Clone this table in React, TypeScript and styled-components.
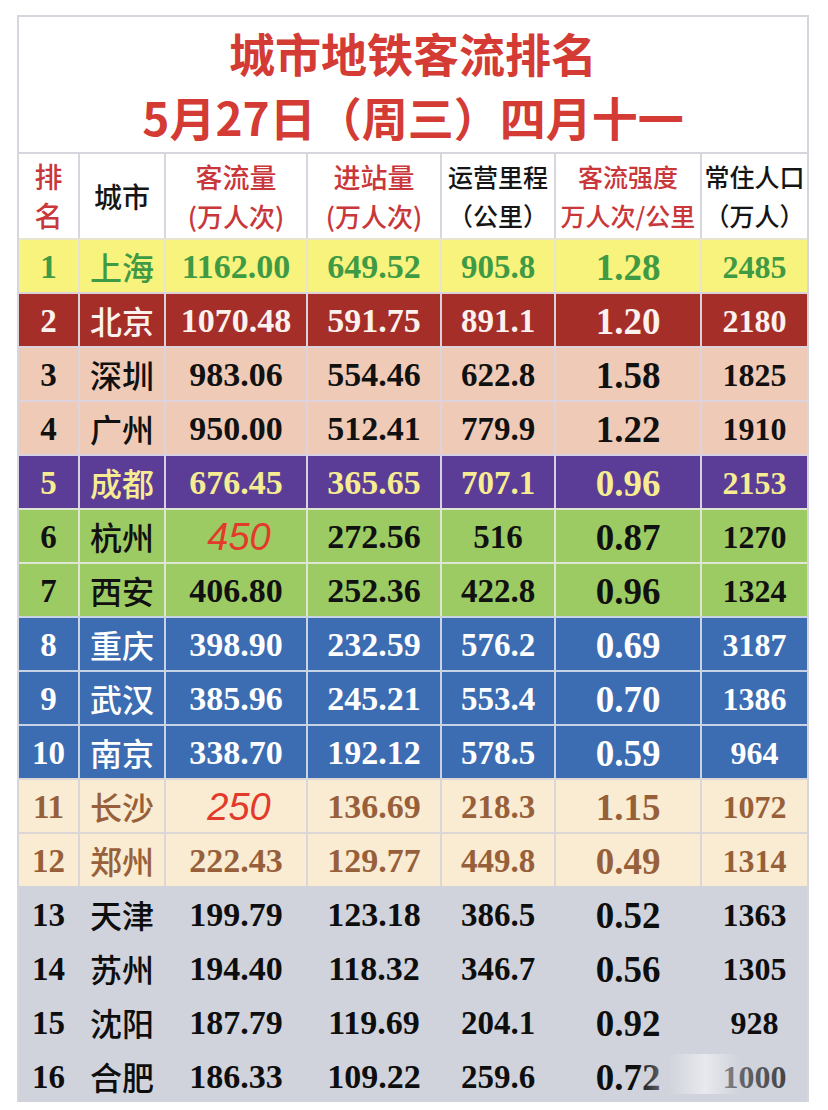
import React from "react";
import styled, { createGlobalStyle } from "styled-components";

const Global = createGlobalStyle`
  html, body { margin: 0; padding: 0; background: #ffffff; }
  body { width: 828px; height: 1110px; overflow: hidden; }
`;

const Page = styled.div`
  width: 828px;
  height: 1110px;
  padding: 15px 0 0 17px;
  box-sizing: border-box;
  background: #ffffff;
`;

const Board = styled.div`
  position: relative;
  width: 792px;
  border: 2px solid #d6d6de;
  border-bottom: none;
  box-sizing: border-box;
  background: #ffffff;
`;

const TitleBlock = styled.div`
  height: 135px;
  display: flex;
  flex-direction: column;
  align-items: center;
  justify-content: center;
  padding-bottom: 2px;
  box-sizing: border-box;
`;

const TitleLine = styled.div`
  font-family: "Noto Sans CJK SC", "Noto Sans", sans-serif;
  font-weight: 700;
  font-size: 46px;
  line-height: 64px;
  color: #d33b34;
  white-space: nowrap;
`;

const COLS = "59px 86px 142px 134px 114px 146px 107px";

type Tone = {
  bg: string;
  fg: string;
  line: string;
};

const Row = styled.div<{ $bg: string; $line: string; $h: number }>`
  display: grid;
  grid-template-columns: ${COLS};
  height: ${(p) => p.$h}px;
  background: ${(p) => p.$bg};
  border-top: 2px solid ${(p) => p.$line};
  box-sizing: border-box;
`;

const Cell = styled.div<{ $line: string; $first?: boolean }>`
  display: flex;
  flex-direction: column;
  align-items: center;
  justify-content: center;
  border-left: ${(p) => (p.$first ? "none" : `2px solid ${p.$line}`)};
  min-width: 0;
  white-space: nowrap;
`;

const HeadText = styled.div<{ $red?: boolean; $size: number }>`
  font-family: "Noto Sans CJK SC", "Noto Sans", sans-serif;
  font-weight: 500;
  font-size: ${(p) => p.$size}px;
  line-height: 39px;
  color: ${(p) => (p.$red ? "#c9373b" : "#151515")};
  white-space: nowrap;
`;

const Num = styled.div<{ $fg: string; $size: number }>`
  font-family: "Liberation Serif", "Times New Roman", serif;
  font-weight: 700;
  font-size: ${(p) => p.$size}px;
  line-height: 1;
  color: ${(p) => p.$fg};
  padding-top: 2px;
`;

const City = styled.div<{ $fg: string }>`
  font-family: "Noto Sans CJK SC", "Noto Sans", sans-serif;
  font-weight: 500;
  font-size: 32px;
  line-height: 1;
  color: ${(p) => p.$fg};
`;

const Highlight = styled.div`
  font-family: "Liberation Sans", Arial, sans-serif;
  font-style: italic;
  font-weight: 400;
  font-size: 38px;
  line-height: 1;
  color: #e23a2b;
  padding-left: 6px;
  padding-top: 2px;
`;

const Watermark = styled.div`
  position: absolute;
  right: 0;
  bottom: 8px;
  width: 170px;
  height: 40px;
  background: linear-gradient(
    90deg,
    rgba(208, 211, 220, 0) 0%,
    rgba(208, 211, 220, 0.55) 18%,
    rgba(240, 240, 244, 0.75) 40%,
    rgba(208, 211, 220, 0.45) 60%,
    rgba(208, 211, 220, 0.2) 100%
  );
  pointer-events: none;
`;

const tones: Record<string, Tone> = {
  yellow: { bg: "#f7f37c", fg: "#3f9a45", line: "#e7e4cf" },
  red: { bg: "#a52e29", fg: "#fbf1ee", line: "#dcd3da" },
  peach: { bg: "#efcbb7", fg: "#111111", line: "#ddd3dc" },
  purple: { bg: "#5b3d97", fg: "#f7ec92", line: "#d6d1e3" },
  green: { bg: "#9dcb63", fg: "#111111", line: "#dfe6d6" },
  blue: { bg: "#3c6db3", fg: "#ffffff", line: "#c9d3e6" },
  cream: { bg: "#f9ecd3", fg: "#97603a", line: "#dcd6d6" },
  gray: { bg: "#d0d3dc", fg: "#0e0e0e", line: "#d0d3dc" },
};

type Item = {
  rank: number;
  city: string;
  flow: string;
  entry: string;
  km: string;
  intensity: string;
  pop: string;
  tone: string;
  flowHighlight?: boolean;
};

const data: Item[] = [
  { rank: 1, city: "上海", flow: "1162.00", entry: "649.52", km: "905.8", intensity: "1.28", pop: "2485", tone: "yellow" },
  { rank: 2, city: "北京", flow: "1070.48", entry: "591.75", km: "891.1", intensity: "1.20", pop: "2180", tone: "red" },
  { rank: 3, city: "深圳", flow: "983.06", entry: "554.46", km: "622.8", intensity: "1.58", pop: "1825", tone: "peach" },
  { rank: 4, city: "广州", flow: "950.00", entry: "512.41", km: "779.9", intensity: "1.22", pop: "1910", tone: "peach" },
  { rank: 5, city: "成都", flow: "676.45", entry: "365.65", km: "707.1", intensity: "0.96", pop: "2153", tone: "purple" },
  { rank: 6, city: "杭州", flow: "450", entry: "272.56", km: "516", intensity: "0.87", pop: "1270", tone: "green", flowHighlight: true },
  { rank: 7, city: "西安", flow: "406.80", entry: "252.36", km: "422.8", intensity: "0.96", pop: "1324", tone: "green" },
  { rank: 8, city: "重庆", flow: "398.90", entry: "232.59", km: "576.2", intensity: "0.69", pop: "3187", tone: "blue" },
  { rank: 9, city: "武汉", flow: "385.96", entry: "245.21", km: "553.4", intensity: "0.70", pop: "1386", tone: "blue" },
  { rank: 10, city: "南京", flow: "338.70", entry: "192.12", km: "578.5", intensity: "0.59", pop: "964", tone: "blue" },
  { rank: 11, city: "长沙", flow: "250", entry: "136.69", km: "218.3", intensity: "1.15", pop: "1072", tone: "cream", flowHighlight: true },
  { rank: 12, city: "郑州", flow: "222.43", entry: "129.77", km: "449.8", intensity: "0.49", pop: "1314", tone: "cream" },
  { rank: 13, city: "天津", flow: "199.79", entry: "123.18", km: "386.5", intensity: "0.52", pop: "1363", tone: "gray" },
  { rank: 14, city: "苏州", flow: "194.40", entry: "118.32", km: "346.7", intensity: "0.56", pop: "1305", tone: "gray" },
  { rank: 15, city: "沈阳", flow: "187.79", entry: "119.69", km: "204.1", intensity: "0.92", pop: "928", tone: "gray" },
  { rank: 16, city: "合肥", flow: "186.33", entry: "109.22", km: "259.6", intensity: "0.72", pop: "1000", tone: "gray" },
];

const HEAD_LINE = "#d6d6de";

export default function App() {
  return (
    <>
      <Global />
      <Page>
        <Board>
          <TitleBlock>
            <TitleLine>城市地铁客流排名</TitleLine>
            <TitleLine>5月27日（周三）四月十一</TitleLine>
          </TitleBlock>

          <Row $bg="#ffffff" $line={HEAD_LINE} $h={86}>
            <Cell $line={HEAD_LINE} $first>
              <HeadText $red $size={28}>排</HeadText>
              <HeadText $red $size={28}>名</HeadText>
            </Cell>
            <Cell $line={HEAD_LINE}>
              <HeadText $size={28}>城市</HeadText>
            </Cell>
            <Cell $line={HEAD_LINE}>
              <HeadText $red $size={27}>客流量</HeadText>
              <HeadText $red $size={26}>(万人次)</HeadText>
            </Cell>
            <Cell $line={HEAD_LINE}>
              <HeadText $red $size={27}>进站量</HeadText>
              <HeadText $red $size={26}>(万人次)</HeadText>
            </Cell>
            <Cell $line={HEAD_LINE}>
              <HeadText $size={25}>运营里程</HeadText>
              <HeadText $size={25}>（公里）</HeadText>
            </Cell>
            <Cell $line={HEAD_LINE}>
              <HeadText $red $size={25}>客流强度</HeadText>
              <HeadText $red $size={25}>万人次/公里</HeadText>
            </Cell>
            <Cell $line={HEAD_LINE}>
              <HeadText $size={25}>常住人口</HeadText>
              <HeadText $size={25}>（万人）</HeadText>
            </Cell>
          </Row>

          {data.map((d) => {
            const t = tones[d.tone];
            return (
              <Row key={d.rank} $bg={t.bg} $line={t.line} $h={54}>
                <Cell $line={t.line} $first>
                  <Num $fg={t.fg} $size={33}>{d.rank}</Num>
                </Cell>
                <Cell $line={t.line}>
                  <City $fg={t.fg}>{d.city}</City>
                </Cell>
                <Cell $line={t.line}>
                  {d.flowHighlight ? (
                    <Highlight>{d.flow}</Highlight>
                  ) : (
                    <Num $fg={t.fg} $size={34}>{d.flow}</Num>
                  )}
                </Cell>
                <Cell $line={t.line}>
                  <Num $fg={t.fg} $size={34}>{d.entry}</Num>
                </Cell>
                <Cell $line={t.line}>
                  <Num $fg={t.fg} $size={33}>{d.km}</Num>
                </Cell>
                <Cell $line={t.line}>
                  <Num $fg={t.fg} $size={37}>{d.intensity}</Num>
                </Cell>
                <Cell $line={t.line}>
                  <Num $fg={t.fg} $size={32}>{d.pop}</Num>
                </Cell>
              </Row>
            );
          })}
          <Watermark />
        </Board>
      </Page>
    </>
  );
}
